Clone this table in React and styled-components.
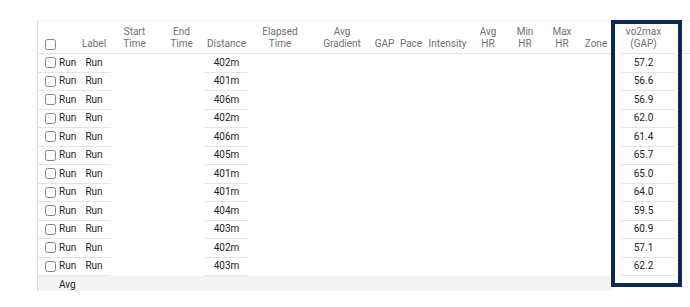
import React from "react";
import styled, { createGlobalStyle } from "styled-components";

const Global = createGlobalStyle`
  html, body { margin: 0; padding: 0; background: #fff; }
  body { font-family: Roboto, "Noto Sans", "Liberation Sans", sans-serif; }
`;

const COLS = "39px 34px 47px 47px 43px 64px 60px 25px 28px 45px 36px 38px 36px 32px 63px";

const Page = styled.div`
  padding: 20px 0 0 37px;
  position: relative;
  height: 307px;
  box-sizing: border-box;
`;

const Table = styled.div`
  position: relative;
  height: 270px;
  overflow: hidden;
  border-left: 1px solid #dedede;
  border-top: 1px solid #efefef;
  font-size: 10px;
  line-height: 12px;
`;

const ScrollThumb = styled.div`
  position: absolute;
  left: 7px;
  top: -1px;
  width: 42px;
  height: 1px;
  background: #d6d6d6;
`;

const Row = styled.div`
  display: grid;
  grid-template-columns: ${COLS};
  height: ${(p) => p.$h};
  box-sizing: border-box;
  border-bottom: ${(p) => (p.$header ? "1px solid #e2e2e2" : "none")};
`;

const HeadCell = styled.div`
  display: flex;
  flex-direction: column;
  justify-content: flex-end;
  align-items: ${(p) => (p.$left ? "flex-start" : "center")};
  padding: 0 0 3px ${(p) => (p.$left ? "7px" : "0")};
  text-align: center;
  color: #6f6f6f;
  white-space: nowrap;
`;

const Cell = styled.div`
  display: flex;
  align-items: center;
  justify-content: ${(p) => (p.$left ? "flex-start" : "center")};
  gap: 3px;
  padding-left: ${(p) => p.$pl || "0"};
  box-sizing: border-box;
  color: #222;
  white-space: nowrap;
  border-bottom: ${(p) => (p.$line ? "1px solid #e4e4e4" : "1px solid transparent")};
  background: ${(p) => p.$bg || "transparent"};
`;

const Check = styled.span`
  display: inline-block;
  width: 11px;
  height: 11px;
  box-sizing: border-box;
  border: 1px solid #858585;
  border-radius: 2.5px;
  background: #fff;
  flex: none;
`;

const Highlight = styled.div`
  position: absolute;
  left: 611px;
  top: 20px;
  width: 71px;
  height: 267px;
  box-sizing: border-box;
  border: 4px solid #0f2850;
  box-shadow: inset 5px 0 0 #fff, inset -3px 0 0 #fff;
  pointer-events: none;
`;

const headers = [
  ["Start", "Time"],
  ["End", "Time"],
  ["Distance"],
  ["Elapsed", "Time"],
  ["Avg", "Gradient"],
  ["GAP"],
  ["Pace"],
  ["Intensity"],
  ["Avg", "HR"],
  ["Min", "HR"],
  ["Max", "HR"],
  ["Zone"],
  ["vo2max", "(GAP)"],
];

const data = [
  ["402m", "57.2"],
  ["401m", "56.6"],
  ["406m", "56.9"],
  ["402m", "62.0"],
  ["406m", "61.4"],
  ["405m", "65.7"],
  ["401m", "65.0"],
  ["401m", "64.0"],
  ["404m", "59.5"],
  ["403m", "60.9"],
  ["402m", "57.1"],
  ["403m", "62.2"],
];

export default function App() {
  return (
    <>
      <Global />
      <Page>
        <Table>
          <ScrollThumb />
          <Row $header $h="33px">
            <HeadCell $left>
              <Check />
            </HeadCell>
            <HeadCell>Label</HeadCell>
            {headers.map((h, i) => (
              <HeadCell key={i}>
                {h.map((t, j) => (
                  <span key={j}>{t}</span>
                ))}
              </HeadCell>
            ))}
          </Row>
          {data.map(([dist, vo], i) => (
            <Row key={i} $h="18.5px">
              <Cell $left $line $pl="7px">
                <Check />
                Run
              </Cell>
              <Cell $line>Run</Cell>
              <Cell />
              <Cell />
              <Cell $line>{dist}</Cell>
              <Cell />
              <Cell />
              <Cell />
              <Cell />
              <Cell />
              <Cell />
              <Cell />
              <Cell />
              <Cell />
              <Cell $line>{vo}</Cell>
            </Row>
          ))}
          <Row $h="18.5px">
            <Cell $left $pl="21px" $bg="#f3f3f3">Avg</Cell>
            {Array.from({ length: 13 }).map((_, i) => (
              <Cell key={i} $bg="#f3f3f3" />
            ))}
            <Cell $bg="#fff" />
          </Row>
        </Table>
        <Highlight />
      </Page>
    </>
  );
}
